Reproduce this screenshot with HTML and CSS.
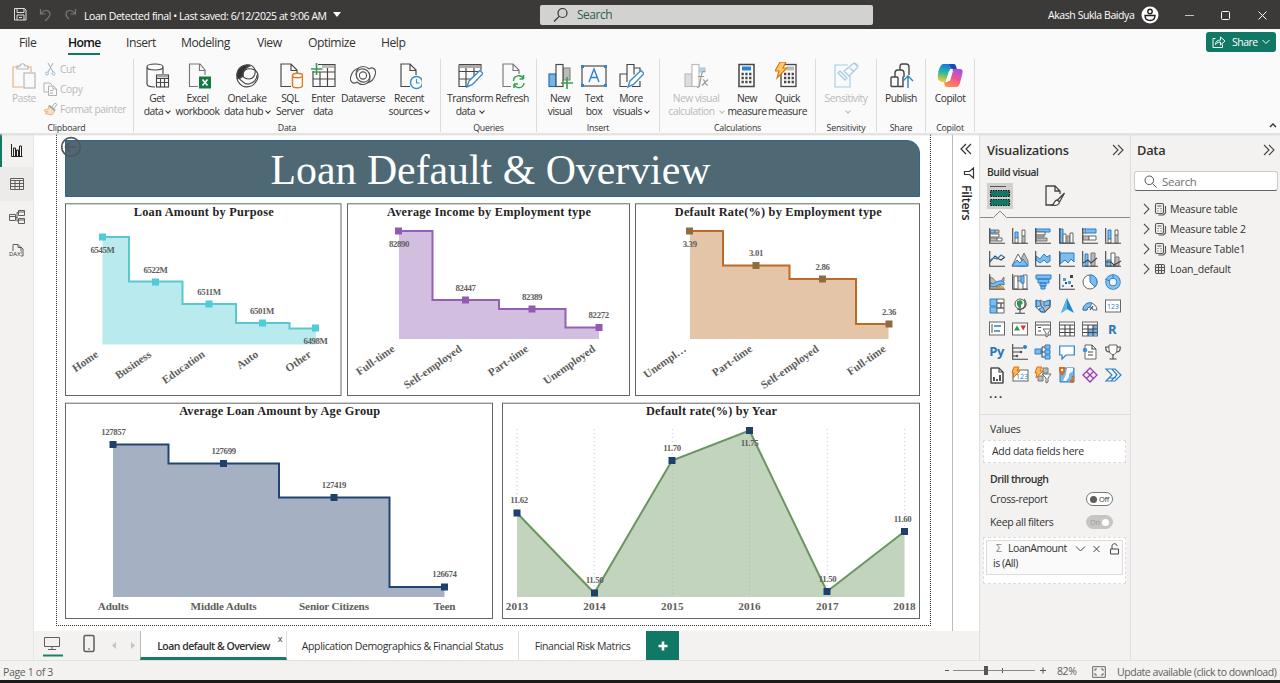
FILE: index.html
```html
<!DOCTYPE html>
<html lang="en">
<head>
<meta charset="utf-8">
<title>Loan Detected final</title>
<link rel="stylesheet" href="styles.css">
</head>
<body>
<div class="app">
<header class="titlebar">
  <svg class="qa" width="78" height="29" viewBox="0 0 78 29"><path class="w" d="M14.5 8.500h10l1.500 1.500v10h-11.500zM17 8.500v4h7v-4M17 20v-5h7v5M19 17.500h3"/><path class="dim" d="M40.500 9v5h5M41 13.500c3-4 8-4 9 0 .5 3-2 5-5 7.500M75.500 9v5h-5M75 13.500c-3-4-8-4-9 0-.5 3 1 4 3 5.500"/></svg>
  <span class="doc">Loan Detected final • Last saved: 6/12/2025 at 9:06 AM</span><i class="caret"></i>
  <div class="topsearch"><svg width="16" height="16" viewBox="0 0 16 16"><circle cx="9.500" cy="6" r="4.500"/><path d="M6.200 9.300L1 14.500"/></svg><span>Search</span></div>
  <span class="user">Akash Sukla Baidya</span>
  <svg class="avatar" width="18" height="18" viewBox="0 0 18 18"><circle cx="9" cy="9" r="8.500" fill="#fff" stroke="none"/><circle cx="9" cy="5.500" r="2.200"/><path d="M4 9.500h10c0 3-2 5-5 5s-5-2-5-5z"/></svg>
  <svg class="winctl" width="90" height="29" viewBox="0 0 90 29"><path d="M5 15.500h9" opacity=".7"/><rect x="41.500" y="11.500" width="8" height="8" rx="1"/><path d="M78.500 11.500l8 8m0-8l-8 8"/></svg>
</header>
<nav class="tabs">
  <a class="t1">File</a><a class="t2 on">Home</a><a class="t3">Insert</a><a class="t4">Modeling</a><a class="t5">View</a><a class="t6">Optimize</a><a class="t7">Help</a>
  <button class="share"><svg width="14" height="14" viewBox="0 0 14 14"><path d="M3.500 3.500h-2.500v9h9.500v-3M3.500 9.500c0-3 2-4.500 5-4.500v-3l4.500 4-4.500 4v-3c-2 0-3.500.5-5 2.500z"/></svg><span>Share</span><svg width="8" height="6" viewBox="0 0 8 6"><path d="M.5 1l3.500 3.500L7.500 1"/></svg></button>
</nav>
<section class="ribbon">
  <div class="grp clip">
    <div class="cliprow">
      <div class="cell paste off"><svg width="26" height="28" viewBox="0 0 26 28"><path d="M8 5H2v20h10M16 5h4v5" stroke="#edc9a0" stroke-width="1.700"/><path d="M6 4h3c0-3 5-3 5 0h3v3H6z" stroke="#b5b5b5"/><rect x="13" y="11" width="11" height="15" stroke="#b5b5b5" fill="#fafafa"/></svg><span>Paste</span></div>
      <div class="clips off">
        <div><svg width="15" height="14" viewBox="0 0 15 14"><path d="M5 1l5 9M10 1l-5 9" stroke="#aaa"/><circle cx="4" cy="11.500" r="1.500" stroke="#8fc0dd"/><circle cx="10.500" cy="11.500" r="1.500" stroke="#8fc0dd"/></svg><span>Cut</span></div>
        <div><svg width="15" height="14" viewBox="0 0 15 14"><path d="M5 10H1V1h6l2 2M5.500 4h5l3 3v6.500h-8zM10 4v3h3M7 8.500h3M7 11h3" stroke="#b0b0b0"/></svg><span>Copy</span></div>
        <div><svg width="15" height="14" viewBox="0 0 15 14"><path d="M9 5l3-4 2 1.500-3 4" stroke="#b0b0b0"/><path d="M6 3.500l6 5-3 4.500-7-1.500 3-2-3 .2-.8-1.700 4-1z" stroke="#e8b98c" fill="#f5ddc6"/><path d="M6 3.500l6 5" stroke="#aaa" stroke-width="2"/></svg><span>Format painter</span></div>
      </div>
    </div>
    <label>Clipboard</label>
  </div>
  <div class="grp data">
    <div class="cells">
      <div class="cell w40"><svg width="26" height="28" viewBox="0 0 26 28"><path d="M3 5c0-4 16-4 16 0s-16 4-16 0v17c0 2 4 3 8 3M19 5v7"/><rect x="12.500" y="13" width="12" height="12" fill="#fff"/><path d="M12.500 16.500h12M12.500 20.500h12M16.500 16v9M20.500 16v9"/><path d="M13 14.500h11" stroke="#aaa" stroke-width="2"/></svg><span>Get<br>data<b class="v"></b></span></div>
      <div class="cell w41"><svg width="26" height="28" viewBox="0 0 26 28"><path d="M13 24.500H4.500V2H15l5 6v5M14.500 2v6.500H20" stroke="#777"/><rect x="14" y="14.500" width="12" height="12" fill="#107c41" stroke="none"/><path d="M17.500 17.500l5 6m0-6l-5 6" stroke="#fff" stroke-width="1.600"/></svg><span>Excel<br>workbook</span></div>
      <div class="cell w58"><svg width="26" height="28" viewBox="0 0 26 28"><path d="M12 3C4 4 2 11 3 16c2 1 4 0 6-2 0-4 1-8 7-10-1-1-2-1-4-1z" fill="#333"/><path d="M12 3c5-1 8 2 9 5 5 4 3 10 0 13-4 5-12 5-15 1-2-2-3-4-3-6"/><path d="M9 14c-1-6 4-9 12-6 1 5-2 9-6 9-3 0-5-1-6-3zM3 16c5 0 5 7 12 6 5-1 8-5 8-9"/></svg><span>OneLake<br>data hub<b class="v"></b></span></div>
      <div class="cell w28"><svg width="26" height="28" viewBox="0 0 26 28"><path d="M14 24.500H4V2h10l6 6v3M14 2v6.500h6"/><path d="M15.500 13.500c0-3 10-3 10 0s-10 3-10 0v10c0 3 10 3 10 0v-10" stroke="#e07a1c" fill="#fff" stroke-width="1.500"/></svg><span>SQL<br>Server</span></div>
      <div class="cell w38"><svg width="26" height="28" viewBox="0 0 26 28"><path d="M8 2.500h17v22H3V9M3 17h22M3 10h22M10 10v15M17.500 3v22"/><path d="M12 4.500h12" stroke="#bbb" stroke-width="3"/><path d="M6.500 1v12M1 7h11.500" stroke="#31a24c" stroke-width="1.600"/></svg><span>Enter<br>data</span></div>
      <div class="cell w42"><svg width="26" height="28" viewBox="0 0 26 28"><g stroke-width="1.100" stroke="#555"><circle cx="13" cy="13.500" r="3.600"/><path d="M19 7C14 2 6 5 6 12c0 5 4 9 9 8 4-1 6-5 4-9"/><path d="M7 20c5 5 13 2 13-5 0-5-4-9-9-8-4 1-6 5-4 9"/><path d="M19 7c4-3 8 1 6 6-1 4-4 7-8 8M7 20c-4 3-8-1-6-6 1-4 4-7 8-8"/></g></svg><span>Dataverse</span></div>
      <div class="cell w50"><svg width="26" height="28" viewBox="0 0 26 28"><path d="M14 24.500H5V2h9l6 6v5M14 2v6.500h6"/><circle cx="20.500" cy="20.500" r="6" fill="#fff" stroke="#3d8dcc" stroke-width="1.500"/><path d="M20.500 17v4h3" stroke="#3d8dcc"/></svg><span>Recent<br>sources<b class="v"></b></span></div>
    </div>
    <label>Data</label>
  </div>
  <div class="grp queries">
    <div class="cells">
      <div class="cell w50"><svg width="26" height="28" viewBox="0 0 26 28"><path d="M2 2.500h22v6M12 24.500H2v-22M2 9.500h20M2 17h14M9 6v18M17 6v10"/><path d="M3 4.500h20" stroke="#aaa" stroke-width="3"/><path d="M10 25l2-6L23 8.500l3 3L15.500 22.500z" stroke="#3d8dcc" fill="#fff" stroke-width="1.400"/></svg><span>Transform<br>data <b class="v"></b></span></div>
      <div class="cell w34"><svg width="26" height="28" viewBox="0 0 26 28"><path d="M12 24.500H4V2h10l6 6v4M14 2v6.500h6" stroke="#777"/><path d="M14.500 19c0-6 8-7 10-2v-4M24.500 17h-4M25 21c-1 6-8 6-10 1v4M15 22h4" stroke="#31a24c" stroke-width="1.500"/></svg><span>Refresh</span></div>
    </div>
    <label>Queries</label>
  </div>
  <div class="grp insert">
    <div class="cells">
      <div class="cell w36"><svg width="26" height="28" viewBox="0 0 26 28"><rect x="2" y="12" width="7" height="12.500" fill="#71b5ea" stroke="#1f6fb2"/><rect x="16" y="6" width="7" height="12" fill="#bbb" stroke="#888"/><rect x="9" y="2.500" width="7" height="22" fill="#fff"/><path d="M20 15v12M14 21h12" stroke="#31a24c" stroke-width="1.600"/></svg><span>New<br>visual</span></div>
      <div class="cell w32"><svg width="28" height="28" viewBox="0 0 28 28"><rect x="2" y="4" width="24" height="20" /><path d="M9 20l5-13 5 13M11 15.500h6" stroke="#2e84cc" stroke-width="1.400"/><path d="M1 3h3v3H1zM24 3h3v3h-3zM1 22h3v3H1zM24 22h3v3h-3z" fill="#2e84cc" stroke="none"/></svg><span>Text<br>box</span></div>
      <div class="cell w42"><svg width="26" height="28" viewBox="0 0 26 28"><path d="M9 24.500H2V12h7M9 20V2.500h7v10M16 6h6v4M22 19v5.500h-8"/><path d="M10 25l2-6L23 8.500l3 3L15.500 22.500z" stroke="#3d8dcc" fill="#fff" stroke-width="1.400"/></svg><span>More<br>visuals<b class="v"></b></span></div>
    </div>
    <label>Insert</label>
  </div>
  <div class="grp calc">
    <div class="cells">
      <div class="cell w60 off"><svg width="26" height="28" viewBox="0 0 26 28"><g stroke="#bbb"><rect x="2" y="12" width="7" height="12.500" fill="#ddd"/><path d="M16 6h6v4h-6z" fill="#b5d3ea" stroke="#a6c9e4"/><rect x="9" y="2.500" width="7" height="22" fill="#fff"/></g><path d="M22 9.500c-3-1-3 1-4 6l-1.500 8c-.5 2-1.500 2-2.500 1.500M15 14.500h6M20 18c2-1 2 6 5 5M25 17.500l-6 6" stroke="#999"/></svg><span>New visual<br>calculation <b class="v"></b></span></div>
      <div class="cell w42"><svg width="26" height="28" viewBox="0 0 26 28"><rect x="5" y="2.500" width="15" height="22" stroke-width="1.500"/><path d="M8 6.500h9" stroke="#2e84cc" stroke-width="4"/><path d="M7.500 12h10M7.500 16h10M7.500 20h10" stroke-width="2.500" stroke-dasharray="2.300 1.500"/></svg><span>New<br>measure</span></div>
      <div class="cell w39"><svg width="26" height="28" viewBox="0 0 26 28"><rect x="6" y="2.500" width="15" height="22" stroke-width="1.300"/><path d="M12 6.500h7" stroke="#bbb" stroke-width="4"/><path d="M9 12h10M9 16h10M9 20h10" stroke-width="2.500" stroke-dasharray="2.300 1.500"/><path d="M5 0h6L8 6h4L2 16l2-7H0z" stroke="#d97706" fill="#ffc56b"/></svg><span>Quick<br>measure</span></div>
    </div>
    <label>Calculations</label>
  </div>
  <div class="grp sens">
    <div class="cells"><div class="cell off"><svg width="26" height="28" viewBox="0 0 26 28"><path d="M15 3H2v22h15V14" stroke="#a6cde4"/><path d="M5 11l7 7 2-2-7-7zM11 9l5 5 9-9-4-4zM17 6l4 4M22 1l3 3" stroke="#a6cde4" stroke-width="1.300"/></svg><span>Sensitivity<br><b class="v"></b></span></div></div>
    <label>Sensitivity</label>
  </div>
  <div class="grp pub">
    <div class="cells"><div class="cell"><svg width="26" height="28" viewBox="0 0 26 28"><g stroke-width="1.400"><rect x="3" y="15" width="7" height="9.500" rx="1"/><path d="M7 15v-4c0-2 1-3 3-3h3c2 0 3 1 3 3v4M10 24.500h5v-10M12 8V5c0-2 1-3 2-3h4c2 0 3 1 3 3v8"/><path d="M20 26V14M15 19l5-5 5 5" stroke="#2e84b5"/></g></svg><span>Publish</span></div></div>
    <label>Share</label>
  </div>
  <div class="grp cop">
    <div class="cells"><div class="cell"><svg width="28" height="28" viewBox="0 0 28 28"><defs><linearGradient id="ca" x1=".5" y1="0" x2=".3" y2="1"><stop offset="0" stop-color="#1675e8"/><stop offset=".45" stop-color="#22b3a8"/><stop offset="1" stop-color="#f5cf27"/></linearGradient><linearGradient id="cb" x1=".7" y1="0" x2=".3" y2="1"><stop offset="0" stop-color="#a44ee8"/><stop offset=".5" stop-color="#f0558d"/><stop offset="1" stop-color="#ff9145"/></linearGradient></defs><path d="M7 2h10c2 0 2 2 3 5h-6l-4 12c-1 2-8 1-8-3C1 12 4 2 7 2z" fill="url(#ca)" stroke="none"/><path d="M21 25H11c-3 0-2-3-3-5 4 1 5-1 6-4l3-9h7c3 0 3 3 2 6s-2 12-5 12z" fill="url(#cb)" stroke="none"/><path d="M13 2h5c2 0 2 3 3 5h-5z" fill="#1c49b8" stroke="none"/><path d="M13 9h4l-3 10h-4z" fill="#fff" stroke="none"/></svg><span>Copilot</span></div></div>
    <label>Copilot</label>
  </div>
  <svg class="collapse" width="8" height="6" viewBox="0 0 8 6"><path d="M1 5l3-3 3 3"/></svg>
</section>
<main class="body">
  <aside class="rail">
    <div class="on"><svg width="16" height="16" viewBox="0 0 16 16"><path class="s" d="M2.500 1v12.500h11M4.500 5v8.500h2V5zM7.500 7v6.500h2V7zM10.500 3v10.500h2V3z"/></svg></div>
    <div class="hov"><svg width="16" height="16" viewBox="0 0 16 16"><path class="s" d="M1.500 2.500h13v11h-13zM1.500 4.500h13M1.500 7.500h13M1.500 10.500h13M6 5v8.500M10.500 5v8.500"/></svg></div>
    <div><svg width="18" height="16" viewBox="0 0 18 16"><path class="s" d="M1.500 5.500h6v6h-6zM1.500 7.500h6M10.500 1.500h6v5h-6zM10.500 3h6M10.500 9.500h6v5h-6zM10.500 11h6M7.500 8.500H9V3.500h1.500M9 8v4h1.500"/></svg></div>
    <div><svg width="16" height="18" viewBox="0 0 16 18"><path class="s" d="M4 11V2.500h5l3 3V12M9 2.500v3h3M12 5l2 2v7h-2"/></svg><em>DAX</em></div>
  </aside>
  <div class="center">
    <div class="stage">
      <div class="canvas">
        <div class="page">
          <svg class="back" width="22" height="22" viewBox="0 0 22 22"><circle cx="11" cy="11" r="9.300"/><path d="M16 11H6M10 6.500L5.500 11l4.500 4.500"/></svg>
          <h1>Loan Default &amp; Overview</h1>
          <div class="row">
            <svg class="card" width="277" height="193" viewBox="65 203 277 193">
              <rect class="frame" x="65.500" y="203.800" width="275.500" height="191.700"/>
              <text class="ttl" x="203.700" y="216" textLength="140">Loan Amount by Purpose</text>
              <path fill="#b9eaed" d="M102.500 237H129v44.500h53.500V304h53.500v19h53.500v5.500h26.500v16H102.500z"/><path class="ln" stroke="#5ac8d0" d="M102.500 237H129v44.500h53.500V304h53.500v19h53.500v5.500h26"/>
              <path fill="#4fccd8" d="M99 233.500h7v7h-7zM152 278.500h7v7h-7zM205.500 300.500h7v7h-7zM259 319.500h7v7h-7zM312 324.500h7v7h-7z"/>
              <g class="num"><text x="102.500" y="252.500">6545M</text><text x="155.500" y="272.500">6522M</text><text x="209" y="294.500">6511M</text><text x="262" y="313.500">6501M</text><text x="315.500" y="344">6498M</text></g>
              <g class="rot"><text transform="translate(99 356)rotate(-35)">Home</text><text transform="translate(152 356)rotate(-35)">Business</text><text transform="translate(205.500 356)rotate(-35)">Education</text><text transform="translate(259 356)rotate(-35)">Auto</text><text transform="translate(312 356)rotate(-35)">Other</text></g>
            </svg>
            <svg class="card" width="284" height="193" viewBox="346 203 284 193">
              <rect class="frame" x="346.500" y="203.800" width="282" height="191.700"/>
              <text class="ttl" x="488" y="216" textLength="204">Average Income by Employment type</text>
              <path fill="#d2bfdf" d="M398 231h33.500v69h66.500v9h66.500v18.500h33.500V339H398z"/><path class="ln" stroke="#955fb5" d="M398 231h33.500v69h66.500v9h66.500v18.500h33.500"/>
              <path fill="#905bb0" d="M394 227.500h7v7h-7zM461 296.500h7v7h-7zM527.500 305.500h7v7h-7zM594.500 324h7v7h-7z"/>
              <g class="num"><text x="398" y="246.500">82890</text><text x="464.500" y="290.500">82447</text><text x="531" y="299.500">82389</text><text x="597.700" y="318">82272</text></g>
              <g class="rot"><text transform="translate(394.500 350.500)rotate(-35)">Full-time</text><text transform="translate(461.500 350.500)rotate(-35)">Self-employed</text><text transform="translate(528 350.500)rotate(-35)">Part-time</text><text transform="translate(595 350.500)rotate(-35)">Unemployed</text></g>
            </svg>
            <svg class="card" width="285" height="193" viewBox="635 203 285 193">
              <rect class="frame" x="635.500" y="203.800" width="284" height="191.700"/>
              <text class="ttl" x="778.300" y="216" textLength="207">Default Rate(%) by Employment type</text>
              <path fill="#e4c5a8" d="M690 231h33v34.500h66.500V279H856v45h32.500v15H690z"/><path class="ln" stroke="#bd6b24" d="M690 231h33v34.500h66.500V279H856v45h32.500"/>
              <path fill="#8f6b40" d="M686 227.500h7v7h-7zM752.500 262h7v7h-7zM819 275.500h7v7h-7zM885.500 320.500h7v7h-7z"/>
              <g class="num"><text x="689.700" y="246.500">3.39</text><text x="756" y="256">3.01</text><text x="822.500" y="269.500">2.86</text><text x="889" y="314.500">2.36</text></g>
              <g class="rot"><text transform="translate(687 350.500)rotate(-35)">Unempl…</text><text transform="translate(753 350.500)rotate(-35)">Part-time</text><text transform="translate(819.500 350.500)rotate(-35)">Self-employed</text><text transform="translate(886.500 350.500)rotate(-35)">Full-time</text></g>
            </svg>
          </div>
          <div class="row">
            <svg class="card" width="428" height="217" viewBox="65 402 428 217">
              <rect class="frame" x="65.500" y="403.200" width="427" height="215.300"/>
              <text class="ttl" x="279.700" y="415" textLength="201">Average Loan Amount by Age Group</text>
              <path fill="#a5b1c3" d="M113 444.500h55.500V463.500H279V497.500h110.500V587H444.500v10H113z"/><path class="ln" stroke="#224472" d="M113 444.500h55.500V463.500H279V497.500h110.500V587H444.500"/>
              <path fill="#1f3f6c" d="M109.500 441h7v7h-7zM220 460h7v7h-7zM330.500 494h7v7h-7zM441 583.500h7v7h-7z"/>
              <g class="num"><text x="113.300" y="434.500">127857</text><text x="223.600" y="454">127699</text><text x="334" y="488">127419</text><text x="444.500" y="577">126674</text></g>
              <g class="ax"><text x="113.200" y="610" textLength="31">Adults</text><text x="223.600" y="610" textLength="66">Middle Adults</text><text x="334" y="610" textLength="70">Senior Citizens</text><text x="444.500" y="610" textLength="22">Teen</text></g>
            </svg>
            <svg class="card" width="418" height="217" viewBox="502 402 418 217">
              <rect class="frame" x="502.500" y="403.200" width="417" height="215.300"/>
              <text class="ttl" x="711.500" y="415" textLength="131">Default rate(%) by Year</text>
              <path fill="#c2d3be" d="M517 513l77.300 80L672 460.500l77.500-30L827 591.500l77.500-60V597H517z"/>
              <path class="grid" d="M517 429v84M594.300 429v168M672.300 429v168M749.500 429v168M827.300 429v168M904.700 429v103"/>
              <path class="ln" stroke="#69965e" d="M517 513l77.300 80L672 460.500l77.500-30L827 591.500l77.500-60"/>
              <path fill="#1f3f6c" d="M513.500 509.500h7v7h-7zM591 589.500h7v7h-7zM668.500 457h7v7h-7zM746 427h7v7h-7zM823.500 588h7v7h-7zM901 528h7v7h-7z"/>
              <g class="num"><text x="519" y="503">11.62</text><text x="594.500" y="583">11.50</text><text x="672" y="451">11.70</text><text x="749.500" y="446">11.75</text><text x="827.500" y="582">11.50</text><text x="902.500" y="522">11.60</text></g>
              <g class="ax"><text x="517" y="610">2013</text><text x="594.500" y="610">2014</text><text x="672.300" y="610">2015</text><text x="749.500" y="610">2016</text><text x="827.300" y="610">2017</text><text x="904.500" y="610">2018</text></g>
            </svg>
          </div>
        </div>
      </div>
      <div class="filters"><svg width="12" height="12" viewBox="0 0 12 12"><path d="M6 1L1 6l5 5M11 1L6 6l5 5"/></svg><svg class="fun" width="12" height="12" viewBox="0 0 12 12"><path d="M10.500 1v10L6.500 7.500H1.500v-3h5z"/></svg><span>Filters</span></div>
    </div>
    <div class="pagetabs">
      <div class="views"><svg width="106" height="29" viewBox="0 0 106 29"><path class="s" d="M10.500 6.500h15v9h-15zM18 16v2M14 18.500h8"/><rect x="9" y="23.500" width="20" height="2" fill="#1a8068"/><rect class="s" x="50" y="4.500" width="10" height="16" rx="1.500" stroke-width="1.500"/><path class="s" d="M54 18h2"/><path d="M82 11v7l-4-3.500zM97 11v7l4-3.500z" fill="#c4c4c4"/></svg></div>
      <div class="pt on"><span>Loan default &amp; Overview</span><i>x</i></div>
      <div class="pt p2"><span>Application Demographics &amp; Financial Status</span></div>
      <div class="pt p3"><span>Financial Risk Matrics</span></div>
      <button class="add"><svg width="10" height="10" viewBox="0 0 10 10"><path d="M5 .5v9M.5 5h9"/></svg></button>
    </div>
  </div>
  <aside class="viz">
    <div class="phead"><h2>Visualizations</h2><svg width="12" height="12" viewBox="0 0 12 12"><path d="M1 1l5 5-5 5M6 1l5 5-5 5"/></svg></div>
    <h3>Build visual</h3>
    <div class="modes"><div class="m1"><svg width="26" height="26" viewBox="0 0 26 26"><path d="M3 3.500h16" stroke="#555"/><path d="M3.500 7.500h19v6h-19zM3.500 16.500h19v6h-19z" fill="#117865"/><path d="M3.500 7.500h19v6h-19zM3.500 16.500h19v6h-19z" fill="none" stroke="#111" stroke-width="1.200" stroke-dasharray="1.500 1"/></svg></div><svg width="22" height="22" viewBox="0 0 22 22"><path d="M9 20H2V1h9l5 5v3M11 1v5h5" stroke="#444" fill="none" stroke-width="1.300"/><path d="M20.500 8l-7 7 2 2zM13 15c-3 0-2 4-5 5 4 1 7 0 7.500-3z" stroke="#444" fill="#fff" stroke-width="1.300"/></svg></div>
    <svg class="notch" width="150" height="8" viewBox="0 0 150 8"><path d="M0 7.500h13.500L20 1l6.500 6.500H150"/></svg>
    <div class="icons">
      <svg viewBox="0 0 16 16"><path class="b" d="M1 2h5v3H1z"/><path class="g" d="M6 2h4v3H6zM1 10h7v3H1z"/><path class="n" d="M1 6h9v3H1zM8 10h5v3H8z"/><path class="k" d="M.700 0v15.300H16"/></svg>
      <svg viewBox="0 0 16 16"><path class="n" d="M3 9h3v6H3z"/><path class="b" d="M3 4h3v6H3z"/><path class="g" d="M10 8h3v7h-3z"/><path class="n" d="M10 2h3v6h-3z"/><path class="k" d="M.700 0v15.300H16"/></svg>
      <svg viewBox="0 0 16 16"><path class="b" d="M1 1h14v3H1z"/><path class="n" d="M1 4h9v3H1z"/><path class="g" d="M1 7h8v2H1zM1 10h11v3H1z"/><path class="k" d="M.700 0v15.300H16"/></svg>
      <svg viewBox="0 0 16 16"><path class="b" d="M1 1h3v14H1z"/><path class="n" d="M4 6h3v9H4z"/><path class="g" d="M8 8h3v7H8z"/><path class="n" d="M11 5h3v10h-3z"/><path class="k" d="M.700 0v15.300H16"/></svg>
      <svg viewBox="0 0 16 16"><path class="n" d="M1 1h3v4H1z"/><path class="b" d="M3 1h11v4H3z"/><path class="g" d="M1 8h6v4H1z"/><path class="n" d="M7 8h7v4H7z"/><path class="k" d="M.700 0v15.300H16"/></svg>
      <svg viewBox="0 0 16 16"><path class="b" d="M3 2h3v9H3z"/><path class="n" d="M3 11h3v4H3z"/><path class="g" d="M10 7h3v8h-3z"/><path class="n" d="M10 2h3v5h-3z"/><path class="k" d="M.700 0v15.300H16"/></svg>
      <svg viewBox="0 0 16 16"><path class="k" d="M.700 0v15.300H16M1 11l5-6 4 3 2 1 4-3"/><path class="bl" d="M1 9l4-2 3 1 4-4 3 2"/></svg>
      <svg viewBox="0 0 16 16"><path class="g" d="M6 15l6-13 4 8v5z"/><path class="n" d="M0 15l6-12 7 12z"/><path class="b" d="M0 15l5-6 3 3 3-4 5 7z"/></svg>
      <svg viewBox="0 0 16 16"><path class="b" d="M1 5l4 3 4-5 3 3 3-2v6l-3 2-3-3-4 3-4-3z"/><path class="k" d="M.700 0v15.300H16"/></svg>
      <svg viewBox="0 0 16 16"><path class="b" d="M1 2h14v9l-3-3-3 4-3-3-5 4z"/><path class="k" d="M.700 0v15.300H16"/></svg>
      <svg viewBox="0 0 16 16"><path class="b" d="M3 3h3v12H3z"/><path class="g" d="M9 2h4v13H9z"/><path class="k" d="M.700 0v15.300H16M1 12l5-3 3 3 6-5"/></svg>
      <svg viewBox="0 0 16 16"><path class="b" d="M2 9h4v6H2z"/><path class="n" d="M6 2h4v13H6z"/><path class="g" d="M10 6h4v9h-4z"/><path class="k" d="M.700 0v15.300H16M1 11l5 0 3 3 7-4"/></svg>
      <svg viewBox="0 0 16 16"><path d="M1 9l4 2 4-2 6 4v2H1z" fill="#e8a24c"/><path class="g" d="M1 3c5 1 6 7 9 6s3-5 5-6v4c-3 2-3 6-7 6s-3-4-7-5z"/><path class="b" d="M1 9c5 3 7-5 14-1v3c-6-3-8 4-14 1z"/><path class="k" d="M.700 0v15.300H16"/></svg>
      <svg viewBox="0 0 16 16"><path class="n" d="M2 2h4v13H2zM11 1h4v14h-4z"/><path class="g" d="M6 2h4v5H6z"/><path class="b" d="M9 2h3v7H9z"/><path class="k" d="M.700 0v15.300H16"/></svg>
      <svg viewBox="0 0 16 16"><path class="b" d="M1 1h15v4H1zM3 5h11v4H3zM5 9h6v3H5zM6 12h4v3H6z"/></svg>
      <svg viewBox="0 0 16 16"><path class="k" d="M.700 0v15.300H16"/><path fill="#444" d="M11 1h3v3h-3zM6 8h2v2H6zM12 11h2v2h-2z"/><path fill="#4a9bd8" d="M4 4h3v3H4zM9 7h3v3H9zM3 11h2v2H3z"/></svg>
      <svg viewBox="0 0 16 16"><circle class="n" cx="8" cy="8" r="7"/><path class="b" d="M8 8V1a7 7 0 0 1 5 12z"/></svg>
      <svg viewBox="0 0 16 16"><circle cx="8" cy="8" r="5.500" fill="none" stroke="#2b7fc4" stroke-width="4.500"/><circle cx="8" cy="8" r="5.500" fill="none" stroke="#84c0ef" stroke-width="2.800"/><path d="M8 0v5M0 5l5 2" stroke="#2b7fc4"/></svg>
      <svg viewBox="0 0 16 16"><path class="b" d="M1 1h7v7H1zM1 9h7v6H1z"/><path class="n" d="M8 1h7v4H8zM8 5h4v5H8zM12 5h3v5h-3zM8 10h7v5H8z"/></svg>
      <svg viewBox="0 0 16 16"><circle cx="8" cy="6" r="5" fill="#fff" stroke="#555"/><path d="M5 3l4-1 2 3-2 2v3H7L5 7z" fill="#2f9a55"/><path class="k" d="M12 1c5 6 0 12-7 10M8 12v3M3 15.300h10"/></svg>
      <svg viewBox="0 0 16 16"><path class="g" d="M5 2l4 2 6-2v7l-5 5H8z"/><path class="b" d="M1 2l4 1 1 5-5 1zM9 4l6-2v5l-6 1zM4 11l4-2 2 5H6z"/><path class="k" d="M1 2v7l5 5h4l5-5V2" opacity=".6"/></svg>
      <svg viewBox="0 0 16 16"><path d="M8 0l7 15-7-4-6 4z" fill="#2485cf"/><path d="M8 0v11l-6 4z" fill="#55b9ea"/></svg>
      <svg viewBox="0 0 16 16"><path class="n" d="M1 12a7 7 0 0 1 14 0h-4a3 3 0 0 0-6 0z"/><path class="b" d="M1 12a7 7 0 0 1 9-7l-2 4a3 3 0 0 0-3 3z"/><path class="k" d="M8 12l3-4"/></svg>
      <svg viewBox="0 0 16 16"><rect class="n" x=".5" y="2" width="15" height="12"/><text x="8" y="11" class="tiny">123</text></svg>
      <svg viewBox="0 0 16 16"><rect class="n" x=".5" y="1" width="15" height="13"/><path d="M3 3v9" stroke="#555"/><path d="M5 5h7M5 10h6" stroke="#2b7fc4" stroke-width="1.600"/></svg>
      <svg viewBox="0 0 16 16"><rect class="n" x=".5" y="2" width="15" height="12"/><path d="M2 9.500l3-5 3 5z" fill="#2e9a50"/><path d="M8.500 4.500h5.500l-2.800 5z" fill="#d33"/></svg>
      <svg viewBox="0 0 16 16"><rect class="n" x=".5" y="1" width="15" height="13"/><path class="k" d="M1 4h14M3 6.500h3M3 10h3"/><path class="n" d="M8 8h8l-3 4v3l-2 1v-4z"/></svg>
      <svg viewBox="0 0 16 16"><rect class="n" x=".5" y="1" width="15" height="14"/><path class="k" d="M1 4h14M1 8h14M1 11.500h14M6 4v11M11 4v11"/></svg>
      <svg viewBox="0 0 16 16"><rect class="n" x=".5" y="1" width="15" height="14"/><path fill="#6fb2e8" d="M6 8h9v7H6zM11 4h4v5h-4z"/><path class="k" d="M1 4h14M1 8h14M1 11.500h14M6 4v11M11 4v11"/></svg>
      <svg viewBox="0 0 16 16"><text x="7" y="12.500" class="big">R</text></svg>
      <svg viewBox="0 0 16 16"><text x="7.500" y="12" class="big">Py</text></svg>
      <svg viewBox="0 0 16 16"><path class="k" d="M.700 0v15.300H16M1 4h10M1 8h7M1 12h4"/><circle cx="13" cy="3" r="2" fill="#2b7fc4"/><circle cx="9" cy="8" r="1.300" fill="#555"/><circle cx="5" cy="12" r="1.300" fill="#555"/></svg>
      <svg viewBox="0 0 16 16"><path class="k" d="M5 8h5M7 3h3M7 3v10h3"/><path class="b" d="M0 5h6v5H0zM10 1h5v4h-5zM10 6h5v4h-5zM10 11h5v4h-5z"/></svg>
      <svg viewBox="0 0 16 16"><path d="M.7 2h14.600v9H7l-4 4v-4H.700z" fill="#fff" stroke="#2b7fc4" stroke-width="1.200"/></svg>
      <svg viewBox="0 0 16 16"><path class="n" d="M3 1h7l4 4v10H3z"/><path class="k" d="M10 1v4h4M6 8h5M6 11h5"/><circle cx="3" cy="6" r="2.300" fill="#3d95d8"/></svg>
      <svg viewBox="0 0 16 16"><path class="n" d="M4 1h8v5c0 3-2 4-4 5-2-1-4-2-4-5z"/><path class="k" d="M4 3H.7c0 4 1 5 4 5M12 3h3.300c0 4-1 5-4 5M8 10v5M4.500 15h7"/></svg>
      <svg viewBox="0 0 16 16"><path class="n" d="M2 1h8l4 4v11H2z"/><path class="k" d="M2 1h8l4 4v11H2zM10 1v4h4"/><path d="M5 10v4M8 12v2M11 8v6" stroke="#333" stroke-width="1.700"/></svg>
      <svg viewBox="0 0 16 16"><rect class="n" x="1" y="3" width="15" height="11"/><text x="10" y="12" class="tiny">123</text><path class="bolt" d="M2 0h5L5 4h3L1 11l1-5H0z"/></svg>
      <svg viewBox="0 0 16 16"><path class="g" d="M8 1h5v5H8zM3 9h5v5H3z"/><path class="n" d="M7 7h9l-3 4v4l-2 1v-5z"/><path class="bolt" d="M2 0h5L5 4h3L1 11l1-5H0z"/></svg>
      <svg viewBox="0 0 16 16"><path d="M1 1h14v14H1z" fill="#73b9ef" stroke="#2b7fc4"/><path d="M8 1h6v3l-4 3v3l-3 4H4l3-7z" fill="#f8fbff"/><path d="M0 0h6v5L3 9 0 5z" fill="#d86b1b"/><circle cx="3" cy="3" r="1.200" fill="#fff"/><circle cx="14" cy="10" r="1.500" fill="#d86b1b"/><circle cx="13" cy="14" r="2" fill="#d86b1b"/></svg>
      <svg viewBox="0 0 16 16"><path d="M8 1l7 7-7 7-7-7zM4.500 4.500l7 7M11.500 4.500l-7 7" fill="none" stroke="#9c3bb5" stroke-width="1.300"/></svg>
      <svg viewBox="0 0 16 16"><path d="M1 2h9l6 6-6 6H1l6-6zM7 2l5 6-6 6M4 11h7" fill="#fff" stroke="#2b7fc4" stroke-width="1.200"/></svg>
    </div>
    <div class="more">···</div>
    <div class="wells">
      <p class="val">Values</p><div class="well">Add data fields here</div>
      <p class="drill">Drill through</p>
      <div class="tg"><span>Cross-report</span><b class="sw"><i></i>Off</b></div>
      <div class="tg keep"><span>Keep all filters</span><b class="sw gray">On<i></i></b></div>
      <div class="fieldbox"><div class="field"><p><em>Σ</em><span>LoanAmount</span><svg width="45" height="14" viewBox="0 0 45 14"><path d="M1 4.500l4.500 4.500L10 4.500M18.500 4l6 6M24.500 4l-6 6M35.500 7h8v5h-8zM37 7V4c0-3 5-3 5 0"/></svg></p><p>is (All)</p></div></div>
    </div>
  </aside>
  <aside class="datap">
    <div class="phead"><h2>Data</h2><svg width="12" height="12" viewBox="0 0 12 12"><path d="M1 1l5 5-5 5M6 1l5 5-5 5"/></svg></div>
    <div class="dsearch"><svg width="13" height="13" viewBox="0 0 13 13"><circle cx="5.300" cy="5.300" r="4.300"/><path d="M8.500 8.500l4 4"/></svg><span>Search</span></div>
    <ul>
      <li><svg width="24" height="14" viewBox="0 0 24 14"><path d="M1 2l5 5-5 5"/><rect x="12.500" y="1.500" width="8" height="10" rx="1.500"/><path d="M14.500 4h4M14.500 6.500h1m2 0h1m-4 2.500h1m2 0h1M22.500 4v7l-2 2h-5"/></svg><span>Measure table</span></li>
      <li><svg width="24" height="14" viewBox="0 0 24 14"><path d="M1 2l5 5-5 5"/><rect x="12.500" y="1.500" width="8" height="10" rx="1.500"/><path d="M14.500 4h4M14.500 6.500h1m2 0h1m-4 2.500h1m2 0h1M22.500 4v7l-2 2h-5"/></svg><span>Measure table 2</span></li>
      <li><svg width="24" height="14" viewBox="0 0 24 14"><path d="M1 2l5 5-5 5"/><rect x="12.500" y="1.500" width="8" height="10" rx="1.500"/><path d="M14.500 4h4M14.500 6.500h1m2 0h1m-4 2.500h1m2 0h1M22.500 4v7l-2 2h-5"/></svg><span>Measure Table1</span></li>
      <li><svg width="24" height="14" viewBox="0 0 24 14"><path d="M1 2l5 5-5 5"/><rect x="12.500" y="2.500" width="9" height="9" rx="1.500"/><path d="M12.500 5.500h9M12.500 8.500h9M15.500 2.500v9M18.500 2.500v9"/></svg><span>Loan_default</span></li>
    </ul>
  </aside>
</main>
<footer class="status"><span class="pg">Page 1 of 3</span><svg class="zoomer" width="106" height="18" viewBox="0 0 106 18"><path d="M2 9.500h4M59.500 7v5"/><path d="M10 9.500h82" stroke="#888"/><path d="M41 5h4v9h-4z" fill="#555" stroke="none"/><path d="M97 9.500h6M100 6.500v6"/></svg><span class="pct">82%</span><svg class="fit" width="14" height="12" viewBox="0 0 14 12"><path d="M.7.7h12.600v10.600H.700z"/><path d="M3 5V3h2M9 3h2v2M11 7v2H9M5 9H3V7"/></svg><span class="upd">Update available (click to download)</span></footer>
<div class="edge"></div>
</div>
</body>
</html>
```

FILE: styles.css
```css
* { box-sizing: border-box; }
body { margin: 0; width: 1280px; height: 683px; overflow: hidden; font-family: "Open Sans", "Noto Sans", sans-serif; font-size: 10.5px; color: #323130; background: #f3f2f1; }
h1, h2, h3, p, ul { margin: 0; padding: 0; font-weight: 400; }
button { border: 0; padding: 0; font: inherit; }
span { white-space: nowrap; }
svg { display: block; flex: none; }
.app { display: flex; flex-direction: column; height: 683px; }

.titlebar { height: 29px; background: #3b3a39; color: #fff; display: flex; align-items: center; font-size: 10.5px; letter-spacing: -.36px; }
.qa { margin-right: 6px; }
.qa path { fill: none; stroke: #ddd; }
.qa .dim { stroke: #777; stroke-width: 1.2; }
.doc { width: 243px; margin-top: 3px; letter-spacing: -.42px; }
.caret { margin-left: 6px; border: 4px solid transparent; border-top: 5px solid #fff; border-bottom: 0; width: 8px; }
.topsearch { margin-left: 199px; width: 333px; height: 20px; background: #d2d2d0; border-radius: 2px; display: flex; align-items: center; padding-left: 13px; color: #315c50; font-size: 12px; letter-spacing: -.5px; }
.topsearch svg { fill: none; stroke: #333; stroke-width: 1.2; margin-right: 8px; }
.user { margin-left: 175px; width: 86px; letter-spacing: -.42px; }
.avatar { margin-left: 7px; fill: none; stroke: #222; stroke-width: 1.4; }
.winctl { margin-left: 21px; fill: none; stroke: #fff; }

.tabs { height: 27px; background: #fafafa; display: flex; align-items: center; font-size: 12.2px; letter-spacing: -.5px; color: #323130; padding-left: 19px; flex: none; }
.tabs a { height: 24px; line-height: 23px; margin-right: 26px; }
.tabs .t1 { width: 22px; margin-right: 27px; }
.t2 { width: 32px; } .t3 { width: 29px; } .t4 { width: 50px; } .t5 { width: 25px; } .t6 { width: 47px; } .t7 { width: 24px; }
.tabs a.on { font-weight: 600; color: #111; border-bottom: 2px solid #117865; letter-spacing: -.7px; }
.tabs .share { margin-left: auto; margin-right: 4px; width: 70px; height: 20px; margin-top: -1px; background: #117865; color: #fff; border-radius: 3px; display: flex; align-items: center; padding-left: 6px; font-size: 10.5px; letter-spacing: -.5px; }
.share svg { fill: none; stroke: #fff; }
.share span { margin: 0 4px 0 6px; }

.ribbon { height: 78px; flex: none; background: #fafafa; display: flex; position: relative; border-bottom: 1px solid #e4e4e4; box-shadow: 0 1px 2px #d8d8d8; z-index: 2; padding-top: 3px; }
.grp { border-right: 1px solid #dcdcdc; height: 73px; display: flex; flex-direction: column; flex: none; }
.grp label { margin-top: auto; text-align: center; font-size: 8.8px; letter-spacing: -.2px; line-height: 10px; height: 9px; }
.clip { width: 134px; } .data { width: 307px; } .queries { width: 96px; } .insert { width: 123px; } .calc { width: 156px; } .sens { width: 61px; } .pub { width: 49px; } .cop { width: 49px; }
.cells { display: flex; }
.data .cells { padding-left: 3px; } .queries .cells { padding-left: 4px; } .insert .cells { padding-left: 5px; } .calc .cells { padding-left: 6px; }
.cell { display: flex; flex-direction: column; align-items: center; line-height: 13px; font-size: 10.3px; letter-spacing: -.48px; text-align: center; padding-top: 3px; flex: none; width: 100%; }
.cell span { margin-top: 2px; }
.cell svg { fill: none; stroke: #484644; stroke-width: 1.15; }
.w28 { width: 28px; } .w32 { width: 32px; } .w34 { width: 34px; } .w36 { width: 36px; } .w38 { width: 38px; } .w39 { width: 39px; } .w40 { width: 40px; } .w41 { width: 41px; } .w42 { width: 42px; } .w50 { width: 50px; } .w58 { width: 58px; } .w60 { width: 60px; }
.v { display: inline-block; width: 4px; height: 4px; border-right: 1px solid; border-bottom: 1px solid; transform: rotate(45deg); margin: 0 0 2px 3px; }
.off { color: #b9b9b9; }
.cliprow { display: flex; }
.paste { width: 34px; margin-left: 7px; }
.clips { padding-left: 2px; }
.clips div { height: 20px; display: flex; align-items: center; gap: 2px; font-size: 10.3px; letter-spacing: -.42px; }
.clips svg { fill: none; }
.collapse { position: absolute; right: 3px; bottom: 5px; fill: none; stroke: #333; stroke-width: 1.4; }

.body { height: 526px; flex: none; display: flex; }
.rail { width: 34px; background: #f3f2f1; border-right: 1px solid #e6e6e6; }
.rail div { height: 33.4px; display: flex; align-items: center; justify-content: center; position: relative; }
.rail .on { border-left: 2px solid #117865; padding-right: 2px; }
.rail .hov { background: #edebe9; }
.rail em { position: absolute; left: 9px; top: 17px; font: 6px "Open Sans", sans-serif; background: #f3f2f1; line-height: 6px; }
.s { fill: none; stroke: #605e5c; }
.rail .on .s { stroke: #222; }
.center { width: 945px; flex: none; display: flex; flex-direction: column; }
.stage { height: 497px; display: flex; background: #fff; }
.canvas { width: 918px; padding-left: 22px; }
.page { width: 875px; height: 492px; border: 1px dotted #333; border-top: 0; position: relative; padding: 6px 10px 0 8px; }
h1 { height: 57px; background: #4e6973; border: 1px solid #2a6598; border-radius: 0 13px 0 0; font: 41.8px/59px "Liberation Serif", serif; color: #fff; text-align: center; padding-right: 4px; }
.back { position: absolute; left: 3px; top: 2px; fill: none; stroke: #555; stroke-width: 1.7; }
.row { display: flex; justify-content: space-between; margin-top: 6px; }
.frame { fill: #fff; stroke: #666; }
.card { font-family: "Liberation Serif", serif; font-weight: 700; }
.ttl { font-size: 12.3px; fill: #252423; text-anchor: middle; }
.num { font-size: 8.8px; fill: #605e5c; text-anchor: middle; letter-spacing: -.35px; }
.rot { font-size: 11.2px; fill: #605e5c; text-anchor: end; }
.ax { font-size: 11.2px; fill: #605e5c; text-anchor: middle; }
.ln { fill: none; stroke-width: 2; }
.grid { stroke: #9aa; stroke-dasharray: 1 3; opacity: .6; }
.filters { width: 27px; border-left: 1px solid #bbb; display: flex; flex-direction: column; align-items: center; padding-top: 9px; }
.filters svg { fill: none; stroke: #333; stroke-width: 1.2; }
.filters .fun { margin: 12px 0 6px 5px; }
.filters span { writing-mode: vertical-rl; font-weight: 600; font-size: 12.3px; letter-spacing: -.2px; color: #252423; line-height: 14px; }
.pagetabs { height: 29px; display: flex; background: #f3f2f1; font-size: 10.5px; letter-spacing: -.38px; }
.pt { background: #fff; border-right: 1px solid #ddd; display: flex; align-items: center; justify-content: center; position: relative; }
.pt.on { width: 147px; border-left: 1px solid #bbb; border-bottom: 3px solid #1a7a64; font-weight: 600; letter-spacing: -.52px; padding-top: 3px; }
.pt i { position: absolute; right: 4px; top: 1px; font: 9px "Open Sans", sans-serif; }
.p2 { width: 232px; } .p3 { width: 127px; border: 0; }
.add { width: 33px; background: #117865; display: flex; align-items: center; justify-content: center; }
.add path { stroke: #fff; stroke-width: 2.6; }

.viz { width: 152px; flex: none; border-left: 1px solid #dedede; border-right: 1px solid #dedede; }
.phead { display: flex; justify-content: space-between; align-items: center; height: 32px; padding: 0 6px 0 7px; }
.phead svg { fill: none; stroke: #444; stroke-width: 1.1; }
h2 { font-size: 12.8px; font-weight: 600; letter-spacing: -.22px; }
h3 { font-size: 10.3px; font-weight: 600; letter-spacing: -.45px; padding-left: 7px; line-height: 14px; margin-top: -1px; height: 14px; }
.modes { display: flex; align-items: center; padding-left: 7px; gap: 31px; margin-top: 2px; height: 29px; }
.m1 { background: #d2d0ce; width: 26px; height: 26px; }
.notch { fill: none; stroke: #888; }
.icons { display: grid; grid-template-columns: repeat(6, 23.3px); grid-auto-rows: 23.3px; padding: 6px 0 0 5px; place-items: center; height: 170px; }
.icons svg { width: 16px; height: 16px; overflow: visible; }
.k { fill: none; stroke: #444; stroke-width: 1.1; }
.n { fill: #fff; stroke: #666; }
.g { fill: #bbb; stroke: #777; }
.b { fill: #7dbcf0; stroke: #2b7fc4; }
.bl { fill: none; stroke: #2b7fc4; stroke-width: 1.3; }
.bolt { fill: #ffb84d; stroke: #d9731a; }
.tiny { font-size: 7px; fill: #2b7fc4; text-anchor: middle; }
.big { font-size: 13px; font-weight: 700; fill: #2878b5; text-anchor: middle; letter-spacing: -.5px; }
.more { height: 27px; line-height: 18px; padding-left: 9px; font-size: 13px; font-weight: 600; letter-spacing: 1.3px; border-bottom: 1px solid #dcdcdc; }
.wells { padding: 0 4px 0 3px; letter-spacing: -.25px; }
.wells > p { padding-left: 7px; line-height: 16px; }
.val { margin-top: 6px; }
.well { margin-top: 3px; height: 23px; line-height: 20px; background: #fff; border: 1px dashed #ddd; padding-left: 8px; letter-spacing: -.32px; }
.drill { margin-top: 8px; font-weight: 600; letter-spacing: -.47px; }
.tg { display: flex; align-items: center; justify-content: space-between; padding: 0 13px 0 7px; height: 22px; margin-top: 1px; letter-spacing: -.35px; }
.keep { margin-top: 0; height: 24px; }
.sw { width: 27px; height: 14px; border: 1px solid #777; border-radius: 8px; background: #fff; font-size: 7.5px; font-weight: 400; display: flex; align-items: center; gap: 2px; padding-left: 3px; }
.sw i { width: 7px; height: 7px; border-radius: 50%; background: #605e5c; }
.sw.gray { background: #c8c6c4; border-color: #c8c6c4; color: #999; }
.sw.gray i { background: #fff; }
.fieldbox { margin-top: 3px; height: 47px; background: #fff; border: 1px dashed #ddd; padding: 2px; }
.field { height: 35px; border: 1px solid #ddd; background: #fafafa; padding-left: 6px; letter-spacing: -.45px; }
.field p { height: 15px; line-height: 15px; display: flex; align-items: center; }
.field em { font-style: normal; color: #888; margin: 0 5px 0 3px; width: 7px; }
.field svg { fill: none; stroke: #444; margin-left: 8px; }

.datap { width: 149px; flex: none; }
.datap .phead { padding: 0 5px 0 6px; }
.dsearch { margin: 5px 2px 0 3px; height: 20px; background: #fff; border: 1px solid #ccc; border-bottom-color: #666; border-radius: 3px; display: flex; align-items: center; padding-left: 9px; font-size: 11.5px; letter-spacing: -.3px; color: #707070; }
.dsearch svg { fill: none; stroke: #555; margin-right: 5px; }
ul { list-style: none; margin-top: 8px; }
li { height: 20px; display: flex; align-items: center; padding-left: 12px; gap: 3px; letter-spacing: -.2px; }
li svg { fill: none; stroke: #555; }
li path, li rect { stroke-width: 1.1; }

.status { height: 20px; flex: none; border-top: 1px solid #e1e1e1; background: #f3f2f1; display: flex; align-items: center; color: #605e5c; padding-top: 3px; }
.pg { margin-left: 3px; width: 940px; letter-spacing: -.35px; }
.zoomer { fill: none; stroke: #555; margin-top: -4px; flex: none; }
.pct { margin-left: 8px; width: 20px; letter-spacing: -.4px; margin-top: -3px; }
.fit { margin-left: 15px; fill: none; stroke: #666; }
.upd { margin-left: 11px; letter-spacing: -.45px; }
.pg, .pct { flex: none; }
.edge { height: 3px; background: #1d1b1a; }
```
